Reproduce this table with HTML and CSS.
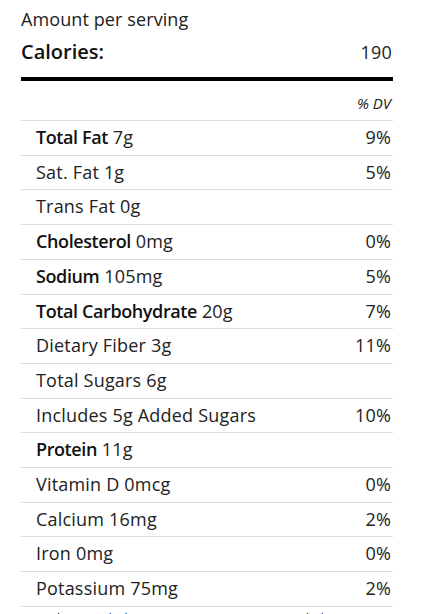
FILE: index.html
```html
<!DOCTYPE html>
<html lang="en">
<head>
<meta charset="utf-8">
<title>Nutrition Facts</title>
<link rel="stylesheet" href="styles.css">
</head>
<body>
<section class="label">
  <div class="serving">Amount per serving</div>
  <div class="calories"><span class="cal-name">Calories:</span><span class="cal-value">190</span></div>
  <div class="bar"></div>
  <div class="dv">% DV</div>
  <ul class="rows">
    <li class="row"><span><b>Total Fat</b> 7g</span><span>9%</span></li>
    <li class="row"><span>Sat. Fat 1g</span><span>5%</span></li>
    <li class="row"><span>Trans Fat 0g</span><span></span></li>
    <li class="row"><span><b>Cholesterol</b> 0mg</span><span>0%</span></li>
    <li class="row"><span><b>Sodium</b> 105mg</span><span>5%</span></li>
    <li class="row"><span><b>Total Carbohydrate</b> 20g</span><span>7%</span></li>
    <li class="row"><span>Dietary Fiber 3g</span><span>11%</span></li>
    <li class="row"><span>Total Sugars 6g</span><span></span></li>
    <li class="row"><span>Includes 5g Added Sugars</span><span>10%</span></li>
    <li class="row"><span><b>Protein</b> 11g</span><span></span></li>
    <li class="row"><span>Vitamin D 0mcg</span><span>0%</span></li>
    <li class="row"><span>Calcium 16mg</span><span>2%</span></li>
    <li class="row"><span>Iron 0mg</span><span>0%</span></li>
    <li class="row"><span>Potassium 75mg</span><span>2%</span></li>
  </ul>
  <p class="note">Ingredients: Whole grain oats, sugar, corn starch, honey, brown sugar syrup, salt.</p>
</section>
</body>
</html>
```

FILE: styles.css
```css
html, body {
  margin: 0;
  padding: 0;
  background: #fff;
}
body {
  font-family: "Open Sans", "Liberation Sans", sans-serif;
  color: #222;
}
.label {
  width: 372px;
  padding: 8px 0 0 21px;
}
.serving {
  font-size: 18px;
  line-height: 22px;
  letter-spacing: 0.1px;
}
.calories {
  display: flex;
  justify-content: space-between;
  align-items: baseline;
  margin-top: 8px;
  line-height: 28px;
  padding-right: 1px;
}
.cal-name {
  font-size: 20px;
  font-weight: 600;
  color: #111;
}
.cal-value {
  font-size: 18px;
  letter-spacing: 0.2px;
}
.bar {
  margin-top: 11px;
  height: 4px;
  background: #000;
}
.dv {
  text-align: right;
  font-style: italic;
  font-size: 15px;
  line-height: 20px;
  padding: 12px 2px 7px 0;
}
.rows {
  list-style: none;
  margin: 0;
  padding: 0;
  border-bottom: 1px solid #ddd;
}
.row {
  display: flex;
  justify-content: space-between;
  border-top: 1px solid #ddd;
  padding: 5px 2px 5px 15px;
  font-size: 18px;
  line-height: 23.7px;
  letter-spacing: 0.2px;
}
.row b {
  font-weight: 600;
  color: #111;
  letter-spacing: -0.4px;
}
.note {
  margin: 2px 0 0;
  font-size: 13px;
  line-height: 18px;
}
```
